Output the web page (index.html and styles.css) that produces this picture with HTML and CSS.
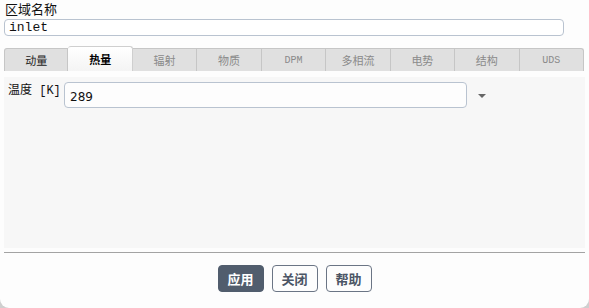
FILE: index.html
```html
<!DOCTYPE html>
<html lang="zh">
<head>
<meta charset="utf-8">
<link rel="stylesheet" href="styles.css">
</head>
<body>
<div class="dialog">
  <div class="field-label">区域名称</div>
  <input class="name-input" type="text" value="inlet">
  <div class="tabs">
    <div class="tab enabled">动量</div>
    <div class="tab active">热量</div>
    <div class="tab">辐射</div>
    <div class="tab">物质</div>
    <div class="tab latin">DPM</div>
    <div class="tab">多相流</div>
    <div class="tab">电势</div>
    <div class="tab">结构</div>
    <div class="tab latin">UDS</div>
  </div>
  <div class="panel">
    <div class="row">
      <span class="row-label">温度 [K]</span>
      <input class="value-input" type="text" value="289">
      <span class="caret"></span>
    </div>
  </div>
  <div class="sep"></div>
  <div class="buttons">
    <button class="btn primary">应用</button>
    <button class="btn">关闭</button>
    <button class="btn">帮助</button>
  </div>
</div>
</body>
</html>
```
FILE: styles.css
```css
html {
  background: #cfcfcf;
}
body {
  margin: 0;
  font-family: "Liberation Mono", "Noto Sans CJK SC", monospace;
  color: #111;
}
.dialog {
  box-sizing: border-box;
  height: 308px;
  background: #fdfdfd;
  border-radius: 0 0 9px 9px;
  padding: 3px 4px 0 4px;
}
.field-label {
  font-size: 13px;
  line-height: 15px;
  height: 16px;
  padding-left: 1px;
}
.name-input {
  display: block;
  box-sizing: border-box;
  width: 560px;
  height: 17px;
  margin: 0;
  border: 1px solid #b9c3d0;
  border-radius: 4px;
  padding: 0 4px;
  font-family: "Liberation Mono", monospace;
  font-size: 13px;
  color: #111;
  background: #fff;
  outline: none;
}
.tabs {
  display: grid;
  grid-template-columns: repeat(9, 1fr);
  width: 580px;
  height: 24px;
  margin-top: 10px;
  align-items: end;
}
.tab {
  box-sizing: border-box;
  height: 23px;
  background: #e0e0e0;
  border: 1px solid #c6c6c6;
  border-bottom: none;
  border-left: none;
  font-size: 11px;
  color: #8a8a8a;
  display: flex;
  align-items: center;
  justify-content: center;
  font-family: "Noto Sans CJK SC", sans-serif;
}
.tab:first-child {
  border-left: 1px solid #c6c6c6;
  border-radius: 3px 0 0 0;
}
.tab:last-child {
  border-radius: 0 3px 0 0;
}
.tab.latin {
  font-family: "Liberation Mono", monospace;
  font-size: 10px;
}
.tab.enabled {
  color: #222;
}
.tab.active {
  height: 25px;
  background: linear-gradient(#ffffff, #f4f4f4);
  color: #000;
  font-weight: bold;
  border-radius: 3px 3px 0 0;
  border-color: #cfcfcf;
}
.panel {
  box-sizing: border-box;
  width: 581px;
  height: 171px;
  margin-top: 7px;
  background: #f7f7f7;
  padding: 5px 4px;
}
.row {
  display: flex;
  align-items: flex-start;
}
.row-label {
  font-family: "Liberation Mono", "Noto Sans CJK SC", monospace;
  font-size: 12px;
  line-height: 15px;
  margin-top: 2px;
  width: 56px;
  white-space: nowrap;
}
.value-input {
  box-sizing: border-box;
  width: 403px;
  height: 26px;
  margin: 0;
  border: 1px solid #b9c3d0;
  border-radius: 4px;
  padding: 3px 5px 0 5px;
  font-family: "DejaVu Sans", sans-serif;
  font-size: 12px;
  color: #111;
  background: #fdfdfd;
  outline: none;
}
.caret {
  width: 0;
  height: 0;
  margin: 12px 0 0 11px;
  border-left: 4px solid transparent;
  border-right: 4px solid transparent;
  border-top: 4px solid #666;
}
.sep {
  width: 581px;
  height: 1px;
  margin-top: 4px;
  background: #a3a3a3;
}
.buttons {
  width: 581px;
  display: flex;
  justify-content: center;
  gap: 8px;
  margin-top: 12px;
}
.btn {
  box-sizing: border-box;
  width: 46px;
  height: 27px;
  margin: 0;
  padding: 0;
  border: 1px solid #6b7585;
  border-radius: 4px;
  background: #fdfdfd;
  color: #4b5565;
  font-family: "Noto Sans CJK SC", sans-serif;
  font-weight: bold;
  font-size: 13px;
}
.btn.primary {
  background: #515d6d;
  border-color: #515d6d;
  color: #fff;
}
```
